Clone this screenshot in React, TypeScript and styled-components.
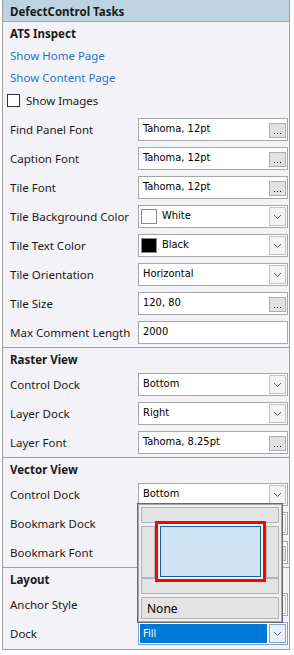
import React from 'react';
import styled, { createGlobalStyle } from 'styled-components';

const GlobalStyle = createGlobalStyle`
  body {
    margin: 0;
    background: #ffffff;
    font-family: "Noto Sans", "Open Sans", sans-serif;
  }
`;

const Page = styled.div`
  width: 294px;
  height: 655px;
  padding-left: 2px;
  box-sizing: border-box;
`;

const Panel = styled.div`
  position: relative;
  width: 288px;
  height: 650px;
  box-sizing: border-box;
  border: 1px solid #a0a0a0;
  border-top: none;
  background: #f3f2f6;
  font-size: 11.5px;
  color: #1a1a1a;
  overflow: hidden;
`;

const Header = styled.div`
  height: 22px;
  border-bottom: 1px solid #9fa9b2;
  background: #bdd3e2;
  font-weight: 700;
  padding: 2px 0 0 7px;
  box-sizing: border-box;
  display: flex;
  align-items: center;
`;

const Section = styled.div<{ $divided?: boolean }>`
  border-top: ${p => (p.$divided ? '1px solid #a0a0a0' : 'none')};
`;

const SectionTitle = styled.div`
  height: 22px;
  padding-left: 7px;
  font-weight: 700;
  display: flex;
  align-items: center;
`;

const LinkRow = styled.div`
  height: 22px;
  padding-left: 7px;
  display: flex;
  align-items: center;
  color: #2574d2;
`;

const CheckRow = styled.div`
  height: 24px;
  margin-bottom: 3px;
  padding-left: 4px;
  display: flex;
  align-items: center;
  gap: 6px;
`;

const CheckBox = styled.span`
  width: 13px;
  height: 13px;
  box-sizing: border-box;
  border: 1px solid #333333;
  background: #ffffff;
`;

const PropRow = styled.div`
  height: 29px;
  display: flex;
  align-items: center;
`;

const Label = styled.div`
  width: 135px;
  padding-left: 7px;
  box-sizing: border-box;
  white-space: nowrap;
`;

const Field = styled.div<{ $swatch?: boolean; $focused?: boolean }>`
  width: 150px;
  height: 23px;
  box-sizing: border-box;
  border: 1px solid ${p => (p.$focused ? '#7f9fc4' : '#a6a6a6')};
  background: #ffffff;
  display: flex;
  align-items: center;
  padding: 0 1px 0 ${p => (p.$swatch ? '2px' : p.$focused ? '1px' : '4px')};
  font-family: "DejaVu Sans Condensed", "DejaVu Sans", sans-serif;
  font-stretch: condensed;
  font-size: 11px;
  color: #000000;
`;

const Value = styled.span<{ $selected?: boolean }>`
  flex: 1;
  align-self: ${p => (p.$selected ? 'stretch' : 'auto')};
  margin: ${p => (p.$selected ? '1px 2px 1px 0' : '0')};
  padding: ${p => (p.$selected ? '0 0 1px 3px' : '0 0 2px 0')};
  display: flex;
  align-items: center;
  background: ${p => (p.$selected ? '#0078d7' : 'transparent')};
  color: ${p => (p.$selected ? '#ffffff' : '#000000')};
  white-space: nowrap;
`;

const Swatch = styled.span<{ $color: string }>`
  width: 16px;
  height: 15px;
  box-sizing: border-box;
  border: 1px solid #8c8c8c;
  background: ${p => p.$color};
  margin-right: 5px;
`;

const DotsButton = styled.span`
  width: 17px;
  height: 15px;
  margin-top: 2px;
  box-sizing: border-box;
  border: 1px solid #adadad;
  background: #e1e1e1;
  display: flex;
  align-items: flex-end;
  justify-content: center;
  gap: 2px;
  padding-bottom: 3px;
`;

const Dot = styled.span`
  width: 1px;
  height: 1px;
  background: #000000;
`;

const ArrowButton = styled.span<{ $focused?: boolean }>`
  width: 17px;
  height: 19px;
  box-sizing: border-box;
  border: 1px solid ${p => (p.$focused ? '#7fa7d4' : '#c2c2c2')};
  background: ${p => (p.$focused ? '#e8f1fb' : '#f3f3f3')};
  display: flex;
  align-items: center;
  justify-content: center;
`;

const Popup = styled.div`
  position: absolute;
  top: 503px;
  left: 134px;
  width: 146px;
  height: 120px;
  box-sizing: border-box;
  border: 1px solid #6a6a6a;
  box-shadow: inset 0 0 0 1px #a8a8a8;
  background: #f0f0f0;
  padding: 3px;
  display: flex;
  flex-direction: column;
  z-index: 2;
`;

const DockButton = styled.div<{ $h: number }>`
  height: ${p => p.$h}px;
  box-sizing: border-box;
  border: 1px solid #b4b4b4;
  background: #e3e3e3;
`;

const DockMiddle = styled.div`
  height: 52px;
  margin-top: 3px;
  display: flex;
  gap: 5px;
`;

const SideButton = styled(DockButton)<{ $w: number }>`
  width: ${p => p.$w}px;
  height: 52px;
`;

const FillButton = styled.div`
  position: relative;
  z-index: 1;
  width: 101px;
  height: 51px;
  box-sizing: border-box;
  border: 1px solid #1d5e9e;
  background: #cfe4f2;
  box-shadow: 0 0 0 2px #f2f2f2, 0 0 0 5px #ff0000;
`;

const NoneButton = styled.div`
  height: 22px;
  margin-top: 3px;
  box-sizing: border-box;
  border: 1px solid #b4b4b4;
  background: #e3e3e3;
  padding-left: 5px;
  display: flex;
  align-items: center;
  font-size: 12px;
  color: #000000;
`;

type Kind = 'dots' | 'combo' | 'text';

interface Prop {
  label: string;
  value: string;
  kind: Kind;
  swatch?: string;
  selected?: boolean;
}

const Chevron = () => (
  <svg width="9" height="6" viewBox="0 0 9 6">
    <path d="M1 1 L4.5 4.5 L8 1" fill="none" stroke="#606060" strokeWidth="1" />
  </svg>
);

const PropertyRow: React.FC<{ prop: Prop }> = ({ prop }) => (
  <PropRow>
    <Label>{prop.label}</Label>
    <Field $swatch={!!prop.swatch} $focused={prop.selected}>
      {prop.swatch && <Swatch $color={prop.swatch} />}
      <Value $selected={prop.selected}>{prop.value}</Value>
      {prop.kind === 'dots' && (
        <DotsButton>
          <Dot />
          <Dot />
          <Dot />
        </DotsButton>
      )}
      {prop.kind === 'combo' && (
        <ArrowButton $focused={prop.selected}>
          <Chevron />
        </ArrowButton>
      )}
    </Field>
  </PropRow>
);

const general: Prop[] = [
  { label: 'Find Panel Font', value: 'Tahoma, 12pt', kind: 'dots' },
  { label: 'Caption Font', value: 'Tahoma, 12pt', kind: 'dots' },
  { label: 'Tile Font', value: 'Tahoma, 12pt', kind: 'dots' },
  { label: 'Tile Background Color', value: 'White', kind: 'combo', swatch: '#ffffff' },
  { label: 'Tile Text Color', value: 'Black', kind: 'combo', swatch: '#000000' },
  { label: 'Tile Orientation', value: 'Horizontal', kind: 'combo' },
  { label: 'Tile Size', value: '120, 80', kind: 'dots' },
  { label: 'Max Comment Length', value: '2000', kind: 'text' },
];

const raster: Prop[] = [
  { label: 'Control Dock', value: 'Bottom', kind: 'combo' },
  { label: 'Layer Dock', value: 'Right', kind: 'combo' },
  { label: 'Layer Font', value: 'Tahoma, 8.25pt', kind: 'dots' },
];

// values under the open dock editor are covered, so they stay empty
const vector: Prop[] = [
  { label: 'Control Dock', value: 'Bottom', kind: 'combo' },
  { label: 'Bookmark Dock', value: '', kind: 'combo' },
  { label: 'Bookmark Font', value: '', kind: 'dots' },
];

const layout: Prop[] = [
  { label: 'Anchor Style', value: '', kind: 'combo' },
  { label: 'Dock', value: 'Fill', kind: 'combo', selected: true },
];

const App: React.FC = () => (
  <Page>
    <GlobalStyle />
    <Panel>
      <Header>DefectControl Tasks</Header>
      <Section>
        <SectionTitle>ATS Inspect</SectionTitle>
        <LinkRow>Show Home Page</LinkRow>
        <LinkRow>Show Content Page</LinkRow>
        <CheckRow>
          <CheckBox />
          Show Images
        </CheckRow>
        {general.map(p => (
          <PropertyRow key={p.label} prop={p} />
        ))}
      </Section>
      <Section $divided>
        <SectionTitle>Raster View</SectionTitle>
        {raster.map(p => (
          <PropertyRow key={p.label} prop={p} />
        ))}
      </Section>
      <Section $divided>
        <SectionTitle>Vector View</SectionTitle>
        {vector.map(p => (
          <PropertyRow key={p.label} prop={p} />
        ))}
      </Section>
      <Section $divided>
        <SectionTitle>Layout</SectionTitle>
        {layout.map(p => (
          <PropertyRow key={p.label} prop={p} />
        ))}
      </Section>

      <Popup>
        <DockButton $h={16} />
        <DockMiddle>
          <SideButton $h={52} $w={14} />
          <FillButton />
          <SideButton $h={52} $w={13} />
        </DockMiddle>
        <DockButton $h={17} />
        <NoneButton>None</NoneButton>
      </Popup>
    </Panel>
  </Page>
);

export default App;
